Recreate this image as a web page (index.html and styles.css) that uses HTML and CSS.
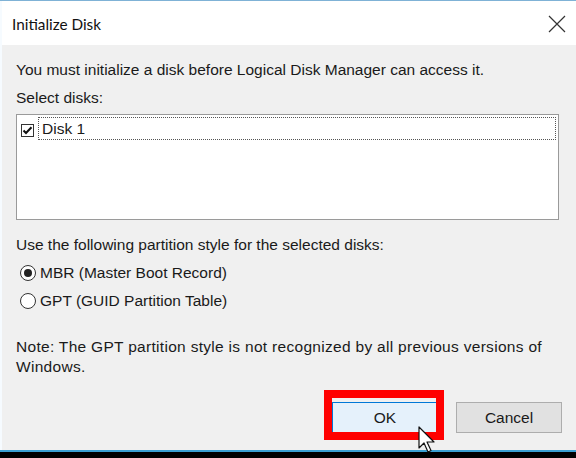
FILE: index.html
```html
<!DOCTYPE html>
<html>
<head>
<meta charset="utf-8">
<link rel="stylesheet" href="styles.css">
</head>
<body>
<div class="window">
  <div class="titlebar">
    <span class="title">Initialize Disk</span>
    <svg class="close" width="18" height="18" viewBox="0 0 18 18"><path d="M1 1 L17 17 M17 1 L1 17" stroke="#333" stroke-width="1.2" fill="none"/></svg>
  </div>
  <div class="body">
    <p class="line intro">You must initialize a disk before Logical Disk Manager can access it.</p>
    <p class="line label">Select disks:</p>
    <div class="listbox">
      <div class="item">
        <svg class="check" width="13" height="13" viewBox="0 0 13 13"><rect x="0.5" y="0.5" width="12" height="12" fill="#fff" stroke="#333"/><path d="M2.5 6.5 L5 9 L10.5 3.2" stroke="#111" stroke-width="2" fill="none"/></svg>
        <span class="item-label">Disk 1</span>
      </div>
    </div>
    <p class="line section">Use the following partition style for the selected disks:</p>
    <div class="radios">
      <div class="radio-row">
        <span class="radio checked"></span>
        <span>MBR (Master Boot Record)</span>
      </div>
      <div class="radio-row">
        <span class="radio"></span>
        <span>GPT (GUID Partition Table)</span>
      </div>
    </div>
    <p class="line note">Note: The GPT partition style is not recognized by all previous versions of<br>Windows.</p>
    <div class="buttons">
      <div class="btn-wrap">
        <button class="btn ok">OK</button>
        <div class="highlight"></div>
        <svg class="cursor" width="20" height="28" viewBox="0 0 20 28"><path d="M1 1 L1 22 L6 17 L10 26 L13 24.5 L9 16 L16 16 Z" fill="#fff" stroke="#111" stroke-width="1.2" stroke-linejoin="round"/></svg>
      </div>
      <button class="btn cancel">Cancel</button>
    </div>
  </div>
  <div class="bottom-edge"></div>
</div>
</body>
</html>
```
FILE: styles.css
```css
* { box-sizing: border-box; }
html, body { margin: 0; padding: 0; }
body {
  width: 576px;
  height: 458px;
  overflow: hidden;
  background: #000;
  font-family: "Liberation Sans", Arial, sans-serif;
  color: #1a1a1a;
}
.window {
  display: flex;
  flex-direction: column;
  height: 458px;
  border-top: 1px solid #7fb2d6;
}
.titlebar {
  height: 44px;
  background: #fff;
  display: flex;
  align-items: center;
  justify-content: space-between;
  padding: 0 10px 0 10px;
  border-left: 2px solid #f6fbff;
}
.title {
  font-family: Lato, "Noto Sans", sans-serif;
  font-size: 15.3px;
  color: #111;
  padding-top: 2px;
}
.close { margin-top: 1px; }
.body {
  height: 405px;
  background: #f0f0f0;
  padding: 15px 14px 0 14px;
  display: flex;
  flex-direction: column;
  font-size: 15.5px;
  border-left: 2px solid #f6fbff;
}
.line { margin: 0; line-height: 20px; }
.label { margin-top: 8px; }
.listbox {
  margin-top: 6px;
  height: 106px;
  width: 543px;
  background: #fff;
  border: 1px solid #9a9a9a;
  padding: 2px 2px 0 4px;
}
.item {
  display: flex;
  align-items: center;
  height: 23px;
}
.check { flex: none; margin-top: 3px; }
.item-label {
  flex: 1;
  margin-left: 4px;
  height: 23px;
  line-height: 21px;
  border: 1px dotted #555;
  padding-left: 3px;
}
.section { margin-top: 15px; }
.radios {
  margin-top: 8px;
  display: flex;
  flex-direction: column;
  gap: 8px;
}
.radio-row {
  display: flex;
  align-items: center;
  height: 20px;
  gap: 4px;
  padding-left: 4px;
}
.radio {
  width: 16px;
  height: 16px;
  border-radius: 50%;
  border: 1.5px solid #333;
  background: #fff;
  display: flex;
  align-items: center;
  justify-content: center;
}
.radio.checked::after {
  content: "";
  width: 8px;
  height: 8px;
  border-radius: 50%;
  background: #222;
}
.note { margin-top: 26px; letter-spacing: 0.3px; }
.buttons {
  margin-top: 25px;
  display: flex;
  justify-content: flex-end;
  gap: 18px;
  margin-right: 0;
}
.btn-wrap { position: relative; }
.btn {
  width: 106px;
  height: 31px;
  font-family: "Liberation Sans", Arial, sans-serif;
  font-size: 15.5px;
  color: #1a1a1a;
  padding: 0;
}
.ok {
  background: #e5f1fb;
  border: 1px solid #0078d7;
}
.cancel {
  background: #e1e1e1;
  border: 1px solid #adadad;
}
.highlight {
  position: absolute;
  left: -8px;
  top: -12px;
  width: 120px;
  height: 50px;
  border: 8px solid #f00;
}
.cursor {
  position: absolute;
  left: 86px;
  top: 24px;
}
.bottom-edge {
  height: 2px;
  background: #3a9fd2;
}
```
